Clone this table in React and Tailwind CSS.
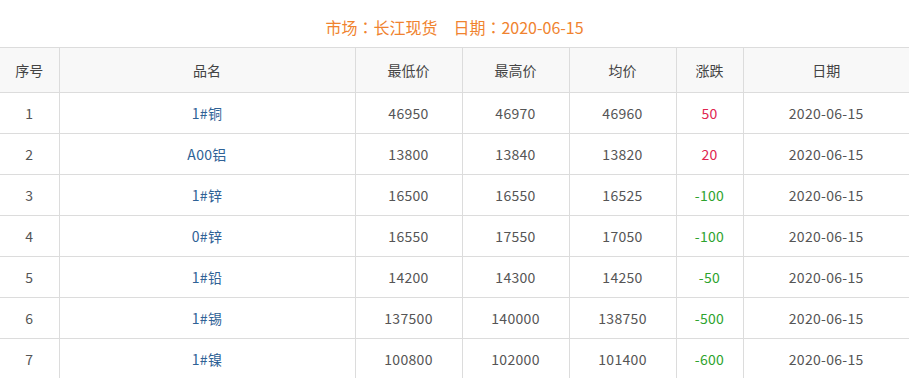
const rows = [
  { no: 1, name: "1#铜", low: "46950", high: "46970", avg: "46960", diff: "50" },
  { no: 2, name: "A00铝", low: "13800", high: "13840", avg: "13820", diff: "20" },
  { no: 3, name: "1#锌", low: "16500", high: "16550", avg: "16525", diff: "-100" },
  { no: 4, name: "0#锌", low: "16550", high: "17550", avg: "17050", diff: "-100" },
  { no: 5, name: "1#铅", low: "14200", high: "14300", avg: "14250", diff: "-50" },
  { no: 6, name: "1#锡", low: "137500", high: "140000", avg: "138750", diff: "-500" },
  { no: 7, name: "1#镍", low: "100800", high: "102000", avg: "101400", diff: "-600" },
];

const font = { fontFamily: '"Microsoft YaHei", "Noto Sans CJK SC", sans-serif' };
// centred full-width colon, as in the original font
const colon = { fontFamily: '"Noto Sans CJK JP", sans-serif' };

export default function App() {
  return (
    <div className="w-[909px] h-[378px] overflow-hidden bg-white" style={font}>
      <div className="h-[47px] flex items-center justify-center pt-[6px] text-[16px] text-[#f0832f]">
        <span>
          市场<span style={colon}>：</span>长江现货
        </span>
        <span className="ml-[16px]">
          日期<span style={colon}>：</span>2020-06-15
        </span>
      </div>
      <table className="w-[909px] table-fixed border-collapse text-[14px] text-[#555]">
        <colgroup>
          <col className="w-[59px]" />
          <col className="w-[296px]" />
          <col className="w-[107px]" />
          <col className="w-[107px]" />
          <col className="w-[107px]" />
          <col className="w-[67px]" />
          <col className="w-[166px]" />
        </colgroup>
        <thead>
          <tr className="h-[45px] bg-[#f8f8f8] border-y border-[#dcdcdc]">
            {["序号", "品名", "最低价", "最高价", "均价", "涨跌", "日期"].map((h, i) => (
              <th
                key={h}
                className={`font-normal text-center text-[#444] border-[#dcdcdc] ${i < 6 ? "border-r" : ""}`}
              >
                {h}
              </th>
            ))}
          </tr>
        </thead>
        <tbody className="tracking-[0.3px]">
          {rows.map((r) => (
            <tr key={r.no} className="h-[41px] border-b border-[#dcdcdc]">
              <td className="text-center border-r border-[#dcdcdc]">{r.no}</td>
              <td className="text-center border-r border-[#dcdcdc] text-[#2f6296]">{r.name}</td>
              <td className="text-center border-r border-[#dcdcdc]">{r.low}</td>
              <td className="text-center border-r border-[#dcdcdc]">{r.high}</td>
              <td className="text-center border-r border-[#dcdcdc]">{r.avg}</td>
              <td
                className={`text-center border-r border-[#dcdcdc] ${
                  r.diff.startsWith("-") ? "text-[#2ea32e]" : "text-[#e0244f]"
                }`}
              >
                {r.diff}
              </td>
              <td className="text-center">2020-06-15</td>
            </tr>
          ))}
        </tbody>
      </table>
    </div>
  );
}
